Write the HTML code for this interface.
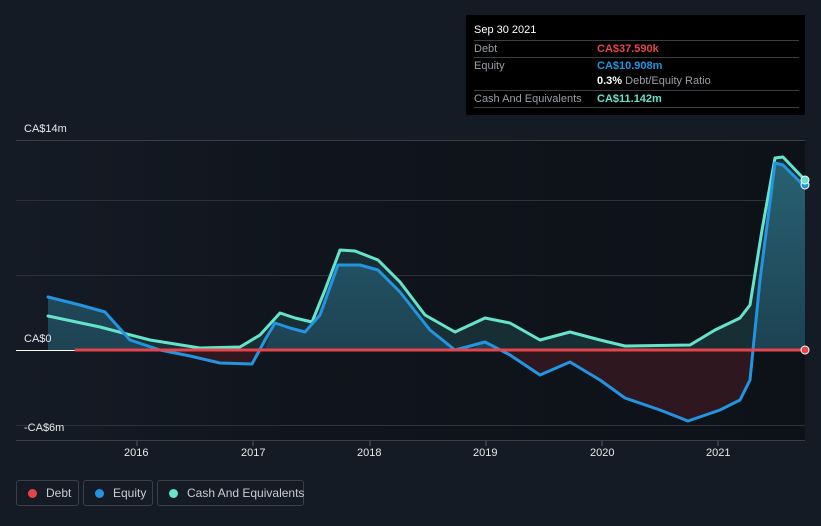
<!DOCTYPE html>
<html><head><meta charset="utf-8"><style>
body{margin:0;width:821px;height:526px;background:#151b25;font-family:"Liberation Sans",sans-serif;overflow:hidden;position:relative}
.t{position:absolute;left:466px;top:15px;width:339px;height:100px;background:#000;color:#fff;font-size:11px}
.r{position:absolute;left:8px;width:325px;border-top:1px solid #3a3d42;height:16px;line-height:16px}
.l{position:absolute;left:0;color:#9a9ea5}
.v{position:absolute;left:123px;font-weight:bold}
.lab{position:absolute;color:#e6e8ea;font-size:11px}
.lg{position:absolute;top:480px;height:26px;border:1px solid #3a4049;border-radius:3px;color:#c9ccd1;font-size:12px;line-height:24px;box-sizing:border-box;white-space:nowrap}
.d{display:inline-block;width:9px;height:9px;border-radius:50%;margin:0 9px 0 11px;vertical-align:-1px}
</style></head><body>
<svg width="821" height="526" style="position:absolute;left:0;top:0">
<defs>
<linearGradient id="bg" x1="0" x2="1"><stop offset="0" stop-color="#151b25"/><stop offset="0.35" stop-color="#10151d"/><stop offset="1" stop-color="#0d1118"/></linearGradient>
<linearGradient id="eq" x1="0" y1="0" x2="0" y2="1"><stop offset="0" stop-color="#2a6a7c" stop-opacity=".85"/><stop offset="1" stop-color="#1e4658" stop-opacity=".85"/></linearGradient>
</defs>
<rect x="16" y="140" width="789" height="300" fill="url(#bg)"/>
<g stroke="#2c3038" stroke-width="1">
<line x1="16" y1="140.5" x2="805" y2="140.5" stroke="#3a3e45"/>
<line x1="16" y1="200.5" x2="805" y2="200.5"/>
<line x1="16" y1="275.5" x2="805" y2="275.5"/>
<line x1="16" y1="425.5" x2="805" y2="425.5"/>
<line x1="16" y1="440.5" x2="805" y2="440.5" stroke="#3a3e45"/>
</g>
<line x1="16" y1="350.5" x2="76" y2="350.5" stroke="#fff"/>
<g stroke="#555a62"><line x1="137" y1="441" x2="137" y2="446"/><line x1="253" y1="441" x2="253" y2="446"/><line x1="370" y1="441" x2="370" y2="446"/><line x1="486" y1="441" x2="486" y2="446"/><line x1="602" y1="441" x2="602" y2="446"/><line x1="718" y1="441" x2="718" y2="446"/></g>
<polygon fill="#1b3b40" fill-opacity=".7" points="48,350 48,316 100,327 150,340 200,348 240,347 260,335 280,313 295,318 312,322 325,290 340,250 355,251 378,260 400,282 425,315 455,332 485,318 510,323 540,340 570,332 600,340 625,346 690,345 715,330 740,318 750,305 762,230 775,158 783,157 805,180 805,350"/>
<polygon fill="#3a1a20" fill-opacity=".75" points="130,350 160,350 190,356 220,363 252,364 265,350 470,350 485,342 497,350 510,355 540,375 570,362 600,380 625,398 660,410 688,421 720,410 740,400 750,380 755,350"/>
<polygon fill="url(#eq)" points="48,350 48,297 80,305 105,312 130,340 160,350 265,350 275,323 290,328 305,332 320,315 338,265 360,265 378,270 400,292 430,330 455,350 470,350 485,342 497,350 755,350 760,280 775,163 783,165 805,187 805,350"/>
<g fill="none" stroke-width="3" stroke-linejoin="round" stroke-linecap="round">
<polyline stroke="#65e3cb" points="48,316 100,327 150,340 200,348 240,347 260,335 280,313 295,318 312,322 325,290 340,250 355,251 378,260 400,282 425,315 455,332 485,318 510,323 540,340 570,332 600,340 625,346 690,345 715,330 740,318 750,305 762,230 775,158 783,157 805,180"/>
<polyline stroke="#2394e0" points="48,297 80,305 105,312 130,340 160,350 190,356 220,363 252,364 265,340 275,323 290,328 305,332 320,315 338,265 360,265 378,270 400,292 430,330 455,350 485,342 510,355 540,375 570,362 600,380 625,398 660,410 688,421 720,410 740,400 750,380 760,280 775,163 783,165 805,187"/>
<line x1="76" y1="350" x2="805" y2="350" stroke="#e5444a"/>
</g>
<circle cx="805" cy="350" r="4" fill="#e5444a" stroke="#fff" stroke-width="1"/>
<circle cx="805" cy="185" r="4" fill="#2394e0" stroke="#fff" stroke-width="1"/>
<circle cx="805" cy="180" r="4" fill="#65e3cb" stroke="#fff" stroke-width="1"/>
</svg>
<div class="lab" style="left:24px;top:123px">CA$14m</div>
<div class="lab" style="left:24px;top:333px">CA$0</div>
<div class="lab" style="left:24px;top:422px">-CA$6m</div>
<div class="lab" style="left:124px;top:447px">2016</div>
<div class="lab" style="left:241px;top:447px">2017</div>
<div class="lab" style="left:357px;top:447px">2018</div>
<div class="lab" style="left:473px;top:447px">2019</div>
<div class="lab" style="left:590px;top:447px">2020</div>
<div class="lab" style="left:706px;top:447px">2021</div>
<div class="t">
<div style="position:absolute;left:8px;top:9px;font-size:11px">Sep 30 2021</div>
<div class="r" style="top:25px"><span class="l">Debt</span><span class="v" style="color:#e5444a">CA$37.590k</span></div>
<div class="r" style="top:42px"><span class="l">Equity</span><span class="v" style="color:#2394e0">CA$10.908m</span></div>
<div class="r" style="top:58px;border-top:none"><span class="v" style="color:#fff">0.3% <span style="color:#9a9ea5;font-weight:normal">Debt/Equity Ratio</span></span></div>
<div class="r" style="top:75px;border-bottom:1px solid #3a3d42"><span class="l">Cash And Equivalents</span><span class="v" style="color:#65e3cb">CA$11.142m</span></div>
</div>
<div class="lg" style="left:16px;width:63px"><span class="d" style="background:#e5444a"></span>Debt</div>
<div class="lg" style="left:83px;width:70px"><span class="d" style="background:#2394e0"></span>Equity</div>
<div class="lg" style="left:157px;width:147px"><span class="d" style="background:#65e3cb"></span>Cash And Equivalents</div>
</body></html>
